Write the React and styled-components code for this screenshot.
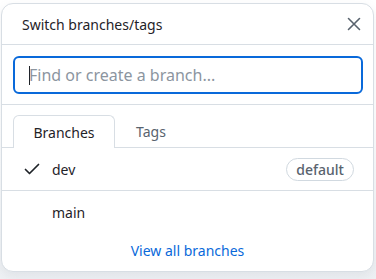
import React from "react";
import styled, { createGlobalStyle } from "styled-components";

const Global = createGlobalStyle`
  html, body { margin: 0; padding: 0; background: #eef1f4; }
  body { font-family: "Segoe UI", "Noto Sans", "Liberation Sans", sans-serif; color: #1f2328; }
  * { box-sizing: border-box; }
`;

const Page = styled.div`
  width: 376px;
  height: 279px;
  padding: 3px 2px 0 1px;
  background: linear-gradient(#ffffff 0, #ffffff 40%, #eef1f4 100%);
`;

const Panel = styled.div`
  width: 373px;
  height: 269px;
  background: #fff;
  border: 1px solid #d8dee4;
  border-radius: 12px;
  box-shadow: 0 4px 10px rgba(140, 149, 159, 0.15);
  display: flex;
  flex-direction: column;
  overflow: hidden;
`;

const Header = styled.div`
  height: 41px;
  display: flex;
  align-items: center;
  justify-content: space-between;
  padding: 0 11px 0 20px;
  border-bottom: 1px solid #d8dee4;
`;

const Title = styled.div`
  font-size: 14px;
  color: #1f2328;
`;

const CloseButton = styled.button`
  border: 0;
  background: none;
  padding: 0;
  width: 16px;
  height: 16px;
  display: flex;
  align-items: center;
  justify-content: center;
  color: #59636e;
`;

const SearchArea = styled.div`
  padding: 11px 10px 10px 11px;
  border-bottom: 1px solid #d8dee4;
`;

const Input = styled.div`
  height: 38px;
  border: 2px solid #0969da;
  border-radius: 6px;
  display: flex;
  align-items: center;
  padding-left: 14px;
  font-size: 16px;
  color: #8c959f;
`;

const Caret = styled.span`
  display: inline-block;
  width: 1px;
  height: 19px;
  background: #1f2328;
  margin-right: -1px;
`;

const TabBar = styled.div`
  display: flex;
  align-items: flex-end;
  height: 43px;
  padding-left: 11px;
  border-bottom: 1px solid #d8dee4;
`;

const Tab = styled.div`
  width: ${(p) => (p.$active ? "102px" : "auto")};
  padding: ${(p) => (p.$active ? "0" : "0 20px")};
  display: flex;
  align-items: center;
  justify-content: center;
  font-size: 14px;
  color: ${(p) => (p.$active ? "#1f2328" : "#59636e")};
  background: #fff;
  border: 1px solid ${(p) => (p.$active ? "#d8dee4" : "transparent")};
  border-bottom: 0;
  border-radius: 6px 6px 0 0;
  margin-bottom: ${(p) => (p.$active ? "-1px" : "0")};
  height: ${(p) => (p.$active ? "33px" : "32px")};
`;

const Row = styled.div`
  height: ${(p) => p.$h}px;
  display: flex;
  align-items: center;
  padding: 0 19px 0 22px;
  border-bottom: ${(p) => (p.$divider ? "1px solid #d8dee4" : "0")};
  font-size: 14px;
  color: #1f2328;
`;

const CheckSlot = styled.span`
  width: 28px;
  display: flex;
  align-items: center;
  color: #1f2328;
`;

const Name = styled.span`
  flex: 1;
`;

const Badge = styled.span`
  height: 23px;
  padding: 0 9px;
  display: inline-flex;
  align-items: center;
  border: 1px solid #d1d9e0;
  border-radius: 12px;
  font-size: 14px;
  font-weight: 500;
  color: #59636e;
`;

const Footer = styled.div`
  display: flex;
  justify-content: center;
  padding-top: 8px;
`;

const Link = styled.a`
  font-size: 14px;
  color: #0969da;
  text-decoration: none;
`;

const Check = () => (
  <svg width="16" height="14" viewBox="0 0 16 14" fill="none" stroke="currentColor" strokeWidth="1.7" strokeLinecap="round" strokeLinejoin="round">
    <path d="M1.5 7.5 L5.5 11.5 L14.5 2.5" />
  </svg>
);

const XIcon = () => (
  <svg width="14" height="14" viewBox="0 0 14 14" fill="none" stroke="currentColor" strokeWidth="1.6" strokeLinecap="round">
    <path d="M1.5 1.5 L12.5 12.5 M12.5 1.5 L1.5 12.5" />
  </svg>
);

export default function App() {
  return (
    <>
      <Global />
      <Page>
        <Panel>
          <Header>
            <Title>Switch branches/tags</Title>
            <CloseButton aria-label="Close">
              <XIcon />
            </CloseButton>
          </Header>
          <SearchArea>
            <Input>
              <Caret />
              Find or create a branch...
            </Input>
          </SearchArea>
          <TabBar>
            <Tab $active>Branches</Tab>
            <Tab>Tags</Tab>
          </TabBar>
          <Row $h={43} $divider>
            <CheckSlot>
              <Check />
            </CheckSlot>
            <Name>dev</Name>
            <Badge>default</Badge>
          </Row>
          <Row $h={42}>
            <CheckSlot />
            <Name>main</Name>
          </Row>
          <Footer>
            <Link href="#">View all branches</Link>
          </Footer>
        </Panel>
      </Page>
    </>
  );
}
